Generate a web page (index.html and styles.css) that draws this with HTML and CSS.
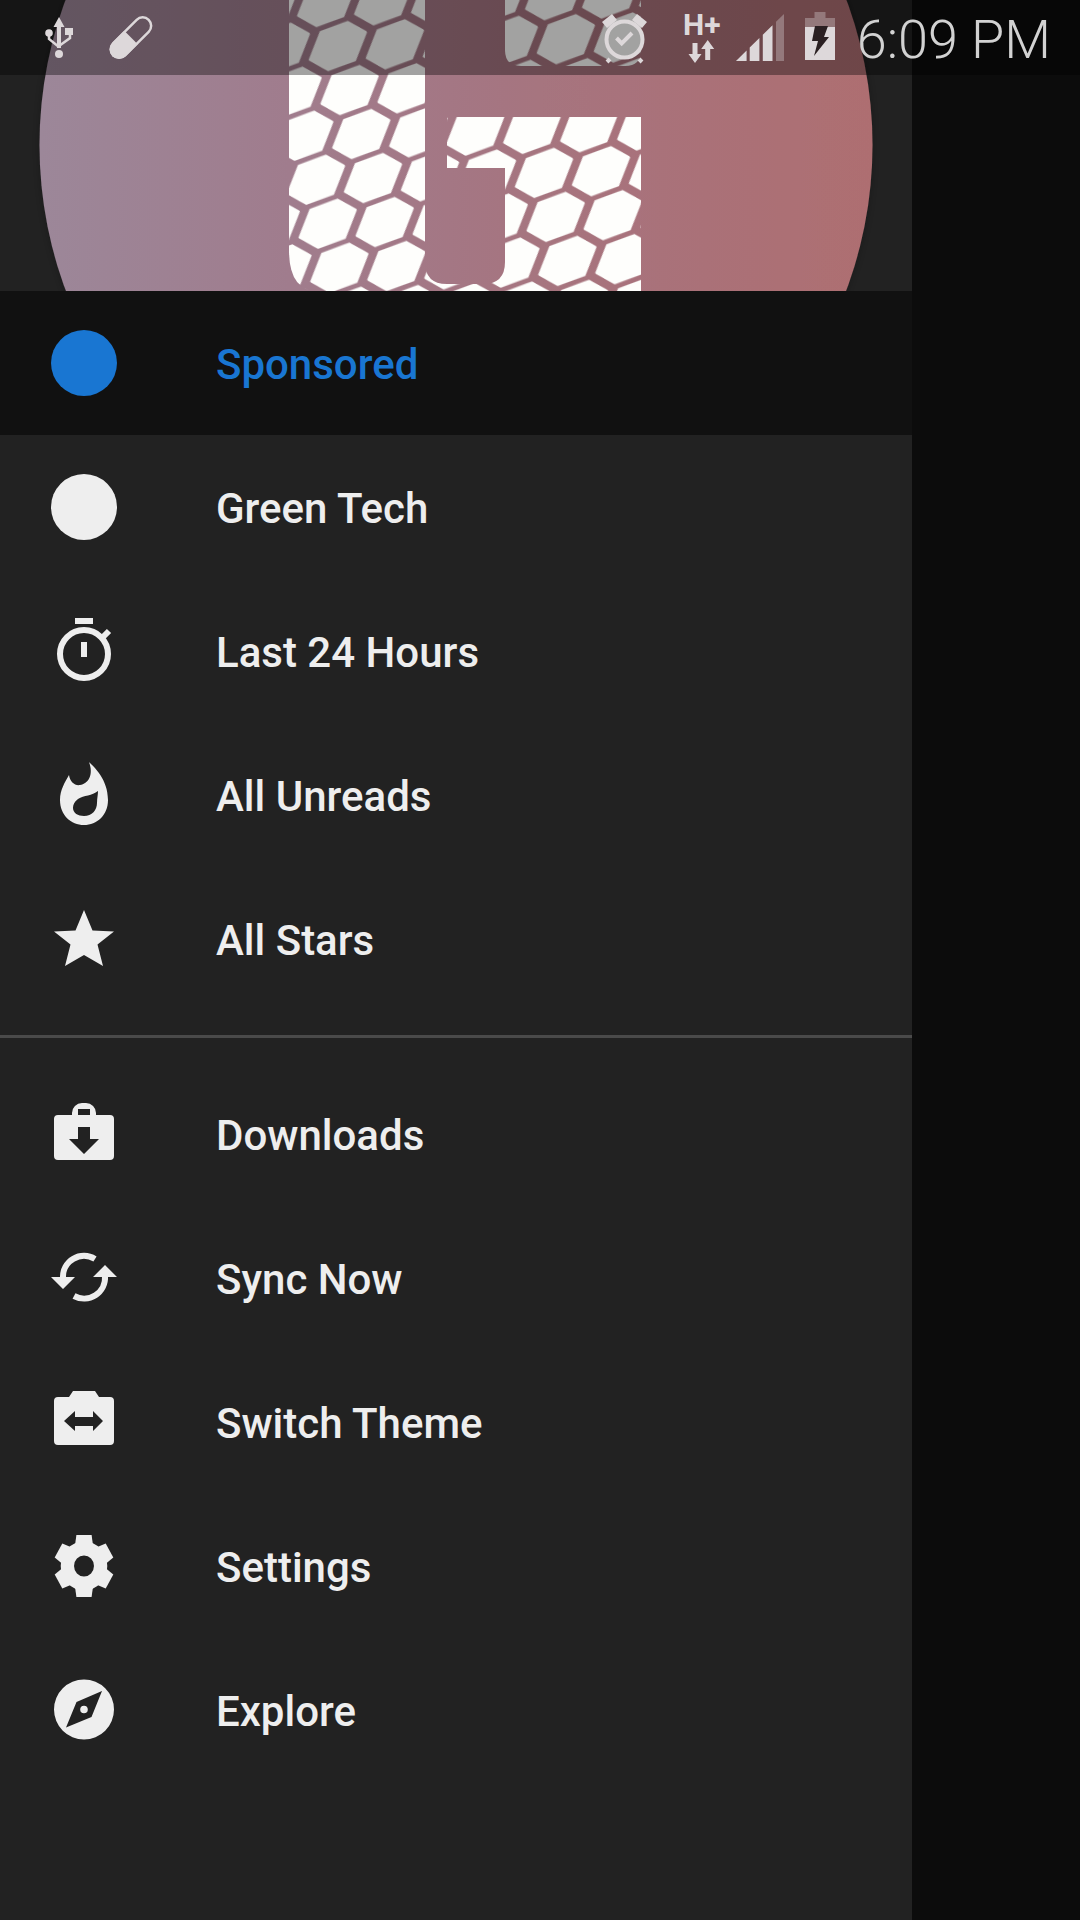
FILE: index.html
```html
<!DOCTYPE html>
<html lang="en">
<head>
<meta charset="utf-8">
<title>Drawer</title>
<link rel="stylesheet" href="styles.css">
</head>
<body>
<div class="screen">
  <aside class="drawer">
    <header class="hero">
      <svg class="hero-art" viewBox="0 0 912 291" aria-hidden="true">
        <defs>
          <linearGradient id="disc" x1="40" x2="872" y1="0" y2="0" gradientUnits="userSpaceOnUse">
            <stop offset="0" stop-color="#9c8799"/>
            <stop offset=".3" stop-color="#a07c8d"/>
            <stop offset=".6" stop-color="#a6747f"/>
            <stop offset="1" stop-color="#ae6e71"/>
          </linearGradient>
          <filter id="soft" x="-5%" y="-5%" width="110%" height="110%">
            <feDropShadow dx="0" dy="0" stdDeviation="5" flood-color="#000" flood-opacity=".25"/>
          </filter>
          <g id="cell"><polygon points="16,-22.5 31.2,-12 12.9,15.4 -16.5,24.5 -31.7,14 -13.4,-13.4"/></g>
          <pattern id="hex" width="57" height="44" patternUnits="userSpaceOnUse" patternTransform="matrix(1 -0.03 0.266 1 338.65 155.86)">
            <g fill="#fefefc" stroke="#fefefc" stroke-width="2.2" stroke-linejoin="round">
              <use href="#cell" x="28.5" y="22"/>
              <use href="#cell" x="-28.5" y="22"/>
              <use href="#cell" x="85.5" y="22"/>
              <use href="#cell" x="28.5" y="-22"/>
              <use href="#cell" x="28.5" y="66"/>
              <use href="#cell" x="-28.5" y="-22"/>
              <use href="#cell" x="85.5" y="-22"/>
              <use href="#cell" x="-28.5" y="66"/>
              <use href="#cell" x="85.5" y="66"/>
            </g>
          </pattern>
        </defs>
        <circle cx="456" cy="145" r="416.5" fill="url(#disc)" filter="url(#soft)"/>
        <path fill="url(#hex)" d="M289 0H425V291H318Q289 291 289 250Z"/>
        <path fill="url(#hex)" d="M447 117H641V291H425V262Q425 284 447 284H483Q505 284 505 262V168H447Z"/>
        <path fill="url(#hex)" d="M505 0H641V50Q641 66 625 66H521Q505 66 505 50Z"/>
      </svg>
      <div class="status">
        <svg class="si si-usb" viewBox="40 0 40 75" aria-hidden="true">
          <path class="si-fill" d="M59 17l5.500 10h-3.500v21h-4v-21h-3.500z"/>
          <circle class="si-fill" cx="59" cy="54" r="4"/>
          <circle class="si-fill" cx="49" cy="33" r="3.800"/>
          <rect class="si-fill" x="65" y="28" width="8" height="7"/>
          <path class="si-line" d="M49 33v6l10 8M70 33v5l-11 8"/>
        </svg>
        <svg class="si si-pill" viewBox="104 0 52 75" aria-hidden="true">
          <g transform="translate(131 37.500) rotate(-45)">
            <rect class="si-line" x="-25" y="-8.500" width="50" height="17" rx="8.500"/>
            <path class="si-fill" d="M0-9.500H-17A9.500 9.500 0 0 0-17 9.500H0Z"/>
          </g>
        </svg>
        <div class="status-right">
          <svg class="si si-alarm" viewBox="600 0 76 75" aria-hidden="true">
            <circle class="si-line si-line-thick" cx="625.500" cy="39.500" r="18"/>
            <path class="si-line si-line-thick" d="M617.500 38l5.200 5.300 10.300-10.300"/>
            <path class="si-line si-line-bell" d="M605.500 25l10-8M635.500 17l10 8"/>
            <path class="si-line si-line-thick" d="M611 59l-3 3M640 59l3 3"/>
          </svg>
          <svg class="si si-net" viewBox="676 0 52 75" aria-hidden="true">
            <text class="net-text" x="684" y="35">H+</text>
            <path class="si-fill" d="M693.500 43h5v11h4l-6.500 9-6.500-9h4z"/>
            <path class="si-fill" d="M706.200 60h5v-11h4l-6.500-9-6.500 9h4z"/>
          </svg>
          <svg class="si si-signal" viewBox="728 0 68 75" aria-hidden="true">
            <path class="si-fill" d="M737 61l10.600-10.400V61zM750.700 47.600l9.700-9.600V61h-9.700zM763.800 34.700l9.700-9.500V61h-9.700z"/>
            <path class="si-dim" d="M777 21.800l8-7.800V61h-8z"/>
          </svg>
          <svg class="si si-batt" viewBox="796 0 50 75" aria-hidden="true">
            <path class="si-dim" d="M815.500 12h11v6h9.500v9h-30v-9h9.500z"/>
            <rect class="si-fill" x="806" y="27" width="30" height="33"/>
            <polygon class="si-bolt" points="816,26 829,26 825,37 830,37 815,56 819,41 813,41"/>
          </svg>
          <span class="clock">6:09 PM</span>
        </div>
      </div>
    </header>

    <nav>
      <ul class="menu">
        <li class="item is-active">
          <svg class="icon" viewBox="0 0 72 72" aria-hidden="true"><circle cx="36" cy="36" r="33"/></svg>
          <span class="label">Sponsored</span>
        </li>
        <li class="item">
          <svg class="icon" viewBox="0 0 72 72" aria-hidden="true"><circle cx="36" cy="36" r="33"/></svg>
          <span class="label">Green Tech</span>
        </li>
        <li class="item">
          <svg class="icon" viewBox="0 0 72 72" aria-hidden="true">
            <rect x="27" y="3" width="18" height="6"/>
            <rect x="33" y="27" width="6" height="15"/>
            <circle class="icon-ring" cx="36" cy="39" r="24"/>
            <path class="icon-ring" d="M55 22l6-6"/>
          </svg>
          <span class="label">Last 24 Hours</span>
        </li>
        <li class="item">
          <svg class="icon" viewBox="0 0 72 72" aria-hidden="true">
            <path fill-rule="evenodd" d="M41 3C46 8 60 20 60 41C60 56 49 66 36 66C23 66 12 56 12 41C12 31 17 23 21 16C22 23 27 27 32 26C40 25 46 16 41 3ZM50 32C44 37 36 36 30 40C26 43 25 46 25 49C25 54 30 57 36 57C44 57 49 51 49 44C49 39 50 36 50 32Z"/>
          </svg>
          <span class="label">All Unreads</span>
        </li>
        <li class="item">
          <svg class="icon" viewBox="0 0 72 72" aria-hidden="true"><path d="M36 7L44.500 27.500 66 28.500 49.500 41.500 55 63 36 52 17 63 22.500 41.500 6 28.500 27.500 27.500Z"/></svg>
          <span class="label">All Stars</span>
        </li>
      </ul>
      <hr class="rule">
      <ul class="menu">
        <li class="item">
          <svg class="icon" viewBox="0 0 72 72" aria-hidden="true">
            <path fill-rule="evenodd" d="M34 5h4a10 10 0 0 1 10 10v2h14a4 4 0 0 1 4 4v37a4 4 0 0 1-4 4H10a4 4 0 0 1-4-4V21a4 4 0 0 1 4-4h14v-2a10 10 0 0 1 10-10zM30 11v6h12v-6zM30 29v12H21l15 15 15-15H42V29z"/>
          </svg>
          <span class="label">Downloads</span>
        </li>
        <li class="item">
          <svg class="icon" viewBox="0 0 72 72" aria-hidden="true">
            <path class="icon-ring" d="M15 36A21 21 0 0 1 47 17"/>
            <path class="icon-ring" d="M57 34A21 21 0 0 1 26 54"/>
            <path d="M3 35H27L15 47ZM45 35H69L57 23Z"/>
          </svg>
          <span class="label">Sync Now</span>
        </li>
        <li class="item">
          <svg class="icon" viewBox="0 0 72 72" aria-hidden="true">
            <path fill-rule="evenodd" d="M25 5H47L51 11H62a4 4 0 0 1 4 4V55a4 4 0 0 1-4 4H10a4 4 0 0 1-4-4V15a4 4 0 0 1 4-4H21ZM16 35L27 45V40H45V45L55 35 45 25V31H27V25Z"/>
          </svg>
          <span class="label">Switch Theme</span>
        </li>
        <li class="item">
          <svg class="icon" viewBox="0 0 72 72" aria-hidden="true">
            <g transform="translate(36 36) scale(.95 1) translate(-36 -36)">
              <circle class="icon-gear" cx="36" cy="36" r="17.500"/>
              <polygon points="26,19 28,5 44,5 46,19"/>
              <polygon points="26,19 28,5 44,5 46,19" transform="rotate(60 36 36)"/>
              <polygon points="26,19 28,5 44,5 46,19" transform="rotate(120 36 36)"/>
              <polygon points="26,19 28,5 44,5 46,19" transform="rotate(180 36 36)"/>
              <polygon points="26,19 28,5 44,5 46,19" transform="rotate(240 36 36)"/>
              <polygon points="26,19 28,5 44,5 46,19" transform="rotate(300 36 36)"/>
            </g>
          </svg>
          <span class="label">Settings</span>
        </li>
        <li class="item">
          <svg class="icon" viewBox="0 0 72 72" aria-hidden="true">
            <path fill-rule="evenodd" d="M36 5.500a30 30 0 1 0 0 60 30 30 0 0 0 0-60zM54 17L43.500 43 18 53.500 28.500 28zM36 31.700a3.800 3.800 0 1 0 0 7.600 3.800 3.800 0 0 0 0-7.600z"/>
          </svg>
          <span class="label">Explore</span>
        </li>
      </ul>
    </nav>
  </aside>
</div>
</body>
</html>
```
FILE: styles.css
```css
* { box-sizing: border-box; }
html, body { margin: 0; padding: 0; background: #0c0c0c; }
.screen { width: 1080px; height: 1920px; overflow: hidden; background: #0c0c0c; font-family: Roboto, "Liberation Sans", sans-serif; }
.drawer { width: 912px; height: 1920px; background: #222; }
.hero { position: relative; height: 291px; }
.hero-art { display: block; width: 912px; height: 291px; overflow: hidden; }
.status { position: absolute; top: 0; left: 0; width: 1080px; height: 75px; display: flex; align-items: center; padding: 0 29px 0 40px; background: rgba(0,0,0,.36); }
.si { display: block; height: 75px; flex: none; }
.si-usb { width: 40px; }
.si-pill { width: 52px; margin-left: 24px; }
.si-alarm { width: 76px; }
.si-net { width: 52px; }
.si-signal { width: 68px; }
.si-batt { width: 50px; }
.si-fill { fill: #ddd8da; }
.si-dim { fill: #ddd8da; opacity: .35; }
.si-line { fill: none; stroke: #ddd8da; stroke-width: 2.5; }
.si-line-thick { stroke-width: 4; }
.si-line-bell { stroke-width: 8; }
.si-bolt { fill: #2a2022; }
.net-text { font-family: Roboto, sans-serif; font-weight: 700; font-size: 30px; fill: #ddd8da; }
.status-right { margin-left: auto; display: flex; align-items: center; }
.clock { margin-left: 12px; padding-top: 4px; font-weight: 300; font-size: 54px; line-height: 71px; color: #d2d2d2; white-space: nowrap; }
.menu { list-style: none; margin: 0; padding: 0; }
.item { height: 144px; display: flex; align-items: center; padding-left: 48px; }
.icon { width: 72px; height: 72px; flex: none; margin-right: 96px; fill: #eee; }
.icon-ring { fill: none; stroke: #eee; stroke-width: 6; }
.icon-gear { fill: none; stroke: #eee; stroke-width: 14; }
.label { padding-top: 2px; font-weight: 500; font-size: 42px; color: #eee; }
.is-active { background: #111; }
.is-active .icon { fill: #1976d2; }
.is-active .label { color: #1976d2; }
.rule { height: 3px; margin: 24px 0; border: 0; background: #4a4a4a; }
```
